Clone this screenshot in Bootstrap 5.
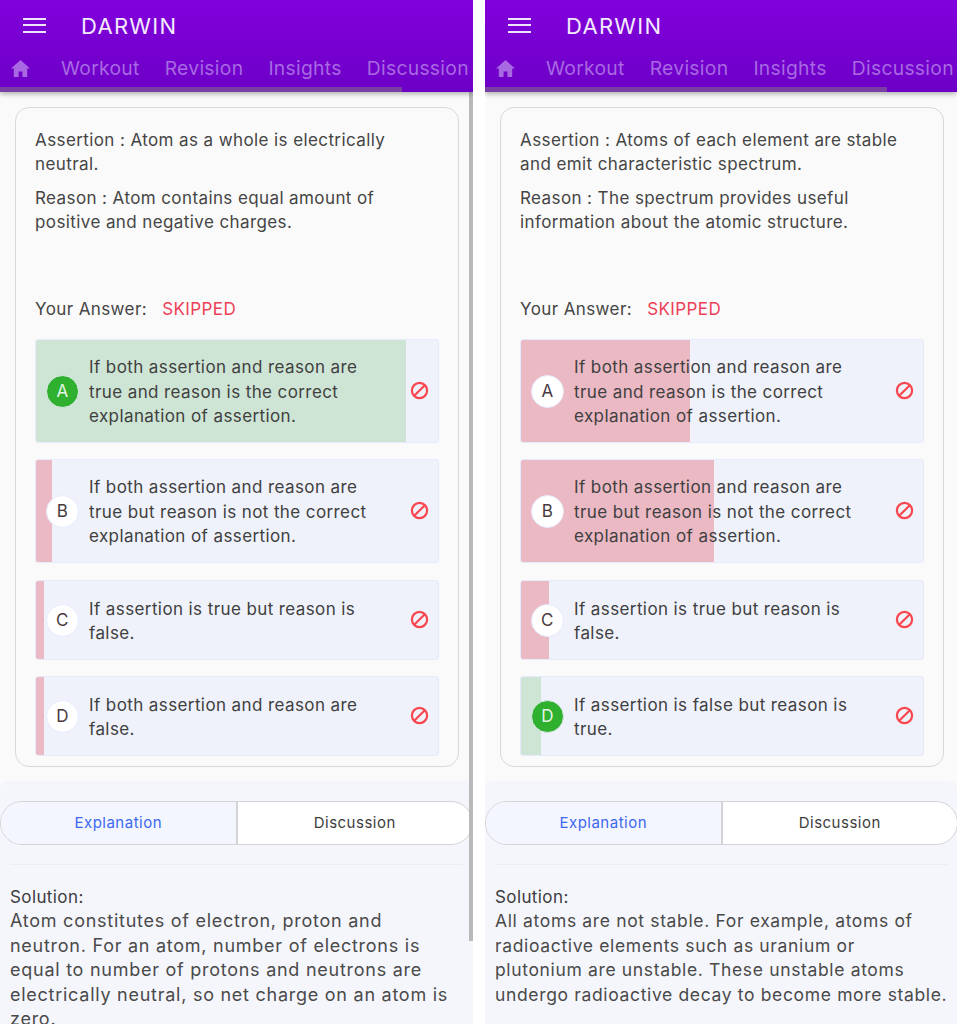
<!DOCTYPE html>
<html lang="en">
  <head>
    <meta charset="UTF-8" />
    <meta name="viewport" content="width=device-width, initial-scale=1.0" />
    <title>Darwin</title>
    <link
      href="https://cdn.jsdelivr.net/npm/bootstrap@5.3.0/dist/css/bootstrap.min.css"
      rel="stylesheet"
    />
    <style>
      body { font-family: Inter, "Open Sans", sans-serif; color: #454545; background: #fff; overflow: hidden; }
      .screens { height: 1024px; gap: 12px; }
      .phone { width: 473px; flex: none; height: 1024px; overflow: hidden; background: #fafafa; }
      .phone + .phone { width: 472px; }
      .phone + .phone .qcard { margin-right: 13px; }
      .topbar { height: 92px; flex: none; background: linear-gradient(#8200dc, #6c00c6); box-shadow: 0 2px 5px rgba(0,0,0,.3); }
      .brandrow { height: 52px; padding-left: 23px; }
      .burger { width: 23px; height: 15px; margin-bottom: 2px; border-top: 2px solid #f0e4fb; border-bottom: 2px solid #f0e4fb; }
      .burger::after { content: ""; display: block; height: 2px; margin-top: 4.5px; background: #f0e4fb; }
      .brandname { margin-left: 35px; font-size: 22px; letter-spacing: 1.3px; color: #f3eafc; font-weight: 400; }
      .tabrow { height: 33px; padding-left: 11px; font-size: 19.3px; letter-spacing: .3px; color: #a869e2; white-space: nowrap; }
      .tabrow span { margin-right: 25px; }
      .tabrow span:last-child { margin-right: 0; }
      .tabrow svg { margin-right: 31px; flex: none; }
      .progresstrack { height: 7px; width: 402px; border-top: 2px solid transparent; background: #7a3fa5; background-clip: padding-box; }
      .qcard { margin: 15px 14px 14px 15px; height: 660px; border: 1px solid #d9d9d9; border-radius: 14px; padding: 20px 19px 10px 19px; background: #fafafa; }
      .qtext { font-size: 17px; line-height: 24px; margin-bottom: 10px; letter-spacing: .4px; }
      .answerline { font-size: 17px; line-height: 24px; letter-spacing: .4px; margin-top: 63px; margin-bottom: 18px; }
      .answerline + .optbox { margin-bottom: 16px; }
      .skipped { color: #ee4157; margin-left: 10px; }
      .optbox { display: flex; align-items: center; border: 1px solid #e6ebfb; border-radius: 3px; margin-bottom: 17px; padding-left: 10px; padding-right: 9px;
        font-size: 17px; line-height: 24.4px; letter-spacing: .4px; color: #404040;
        background: linear-gradient(var(--fillcolor), var(--fillcolor)) no-repeat #eff2fb; background-size: var(--fill) 100%; }
      .optbox.three { height: 104px; }
      .optbox.two { height: 80px; }
      .pink { --fillcolor: #ebb9c4; }
      .green { --fillcolor: #cee5d5; }
      .optletter { width: 33px; height: 33px; flex: none; border-radius: 50%; background: #fff; border: 1px solid #e6ebfb; font-size: 17px; color: #4a3a3f; margin-right: 10px; }
      .optletter.right { background: #2fb02f; color: #e4f5e4; border-color: #dfe9ea; }
      .opttext { flex: 1; padding-right: 25px; padding-top: 2px; }
      .discard { flex: none; margin-bottom: 2px; }
      .lowerpart { background: #f5f6fc; border-radius: 6px 6px 0 0; flex: 1; padding-top: 20px; }
      .switcher { width: 473px; height: 44px; border: 1.5px solid #d4d4d8; border-radius: 22px; overflow: hidden; font-size: 15px; letter-spacing: .5px; background: #fff; }
      .switcher .active-side { width: 236.5px; flex: none; background: #f3f6fe; color: #3d68f0; border-right: 2px solid #d4d4d8; }
      .switcher .plain-side { flex: 1; color: #3d3d3d; }
      .thinrule { margin: 19px 10px 20px; height: 1px; background: #ecedf3; }
      .solution { padding: 0 10px; font-size: 17.5px; line-height: 24.4px; letter-spacing: .65px; color: #4a4a4a; white-space: nowrap; }
      .solution.wider { font-size: 18px; letter-spacing: .74px; }
      .solution .caption { font-size: 17px; letter-spacing: .4px; color: #3c3c3c; }
      .scrollthumb { width: 4px; height: 849px; background: #b9b9b9; top: 92px; right: 0; }
    </style>
  </head>
  <body>
    <div class="screens d-flex">
      <!-- left phone -->
      <div class="phone d-flex flex-column position-relative">
        <div class="topbar d-flex flex-column position-relative z-1">
          <div class="brandrow d-flex align-items-center">
            <div class="burger"></div>
            <div class="brandname">DARWIN</div>
          </div>
          <div class="tabrow d-flex align-items-center">
            <svg width="19" height="17" viewBox="0 0 19 17"><path fill="#a869e2" d="M9.5 0 0 8.5h2.8V17h4.8v-5.6h3.8V17h4.8V8.5H19z"/></svg>
            <span>Workout</span><span>Revision</span><span>Insights</span><span>Discussion</span>
          </div>
          <div class="progresstrack"></div>
        </div>
        <div class="qcard">
          <p class="qtext">Assertion : Atom as a whole is electrically neutral.</p>
          <p class="qtext">Reason : Atom contains equal amount of positive and negative charges.</p>
          <div class="answerline">Your Answer: <span class="skipped">SKIPPED</span></div>
          <div class="optbox three green" style="--fill: 370px">
            <div class="optletter right d-flex align-items-center justify-content-center">A</div>
            <div class="opttext">If both assertion and reason are true and reason is the correct explanation of assertion.</div>
            <svg class="discard" width="19" height="19" viewBox="0 0 19 19"><circle cx="9.5" cy="9.5" r="7.6" fill="none" stroke="#f9474f" stroke-width="2.2"/><path d="M4.2 14.8 14.8 4.2" stroke="#f9474f" stroke-width="2.2"/></svg>
          </div>
          <div class="optbox three pink" style="--fill: 16px">
            <div class="optletter d-flex align-items-center justify-content-center">B</div>
            <div class="opttext">If both assertion and reason are true but reason is not the correct explanation of assertion.</div>
            <svg class="discard" width="19" height="19" viewBox="0 0 19 19"><circle cx="9.5" cy="9.5" r="7.6" fill="none" stroke="#f9474f" stroke-width="2.2"/><path d="M4.2 14.8 14.8 4.2" stroke="#f9474f" stroke-width="2.2"/></svg>
          </div>
          <div class="optbox two pink mb-3" style="--fill: 8px">
            <div class="optletter d-flex align-items-center justify-content-center">C</div>
            <div class="opttext">If assertion is true but reason is false.</div>
            <svg class="discard" width="19" height="19" viewBox="0 0 19 19"><circle cx="9.5" cy="9.5" r="7.6" fill="none" stroke="#f9474f" stroke-width="2.2"/><path d="M4.2 14.8 14.8 4.2" stroke="#f9474f" stroke-width="2.2"/></svg>
          </div>
          <div class="optbox two pink mb-0" style="--fill: 8px">
            <div class="optletter d-flex align-items-center justify-content-center">D</div>
            <div class="opttext">If both assertion and reason are false.</div>
            <svg class="discard" width="19" height="19" viewBox="0 0 19 19"><circle cx="9.5" cy="9.5" r="7.6" fill="none" stroke="#f9474f" stroke-width="2.2"/><path d="M4.2 14.8 14.8 4.2" stroke="#f9474f" stroke-width="2.2"/></svg>
          </div>
        </div>
        <div class="lowerpart">
          <div class="switcher d-flex">
            <div class="active-side d-flex align-items-center justify-content-center">Explanation</div>
            <div class="plain-side d-flex align-items-center justify-content-center">Discussion</div>
          </div>
          <div class="thinrule"></div>
          <div class="solution wider">
            <div class="caption">Solution:</div>
            Atom constitutes of electron, proton and<br />neutron. For an atom, number of electrons is<br />equal to number of protons and neutrons are<br />electrically neutral, so net charge on an atom is<br />zero.
          </div>
        </div>
        <div class="scrollthumb position-absolute"></div>
      </div>
      <!-- right phone -->
      <div class="phone d-flex flex-column">
        <div class="topbar d-flex flex-column position-relative z-1">
          <div class="brandrow d-flex align-items-center">
            <div class="burger"></div>
            <div class="brandname">DARWIN</div>
          </div>
          <div class="tabrow d-flex align-items-center">
            <svg width="19" height="17" viewBox="0 0 19 17"><path fill="#a869e2" d="M9.5 0 0 8.5h2.8V17h4.8v-5.6h3.8V17h4.8V8.5H19z"/></svg>
            <span>Workout</span><span>Revision</span><span>Insights</span><span>Discussion</span>
          </div>
          <div class="progresstrack"></div>
        </div>
        <div class="qcard">
          <p class="qtext">Assertion : Atoms of each element are stable and emit characteristic spectrum.</p>
          <p class="qtext">Reason : The spectrum provides useful information about the atomic structure.</p>
          <div class="answerline">Your Answer: <span class="skipped">SKIPPED</span></div>
          <div class="optbox three pink" style="--fill: 169px">
            <div class="optletter d-flex align-items-center justify-content-center">A</div>
            <div class="opttext">If both assertion and reason are true and reason is the correct explanation of assertion.</div>
            <svg class="discard" width="19" height="19" viewBox="0 0 19 19"><circle cx="9.5" cy="9.5" r="7.6" fill="none" stroke="#f9474f" stroke-width="2.2"/><path d="M4.2 14.8 14.8 4.2" stroke="#f9474f" stroke-width="2.2"/></svg>
          </div>
          <div class="optbox three pink" style="--fill: 193px">
            <div class="optletter d-flex align-items-center justify-content-center">B</div>
            <div class="opttext">If both assertion and reason are true but reason is not the correct explanation of assertion.</div>
            <svg class="discard" width="19" height="19" viewBox="0 0 19 19"><circle cx="9.5" cy="9.5" r="7.6" fill="none" stroke="#f9474f" stroke-width="2.2"/><path d="M4.2 14.8 14.8 4.2" stroke="#f9474f" stroke-width="2.2"/></svg>
          </div>
          <div class="optbox two pink mb-3" style="--fill: 28px">
            <div class="optletter d-flex align-items-center justify-content-center">C</div>
            <div class="opttext">If assertion is true but reason is false.</div>
            <svg class="discard" width="19" height="19" viewBox="0 0 19 19"><circle cx="9.5" cy="9.5" r="7.6" fill="none" stroke="#f9474f" stroke-width="2.2"/><path d="M4.2 14.8 14.8 4.2" stroke="#f9474f" stroke-width="2.2"/></svg>
          </div>
          <div class="optbox two green mb-0" style="--fill: 20px">
            <div class="optletter right d-flex align-items-center justify-content-center">D</div>
            <div class="opttext">If assertion is false but reason is true.</div>
            <svg class="discard" width="19" height="19" viewBox="0 0 19 19"><circle cx="9.5" cy="9.5" r="7.6" fill="none" stroke="#f9474f" stroke-width="2.2"/><path d="M4.2 14.8 14.8 4.2" stroke="#f9474f" stroke-width="2.2"/></svg>
          </div>
        </div>
        <div class="lowerpart">
          <div class="switcher d-flex">
            <div class="active-side d-flex align-items-center justify-content-center">Explanation</div>
            <div class="plain-side d-flex align-items-center justify-content-center">Discussion</div>
          </div>
          <div class="thinrule"></div>
          <div class="solution">
            <div class="caption">Solution:</div>
            All atoms are not stable. For example, atoms of<br />radioactive elements such as uranium or<br />plutonium are unstable. These unstable atoms<br />undergo radioactive decay to become more stable.
          </div>
        </div>
      </div>
    </div>
    <script src="https://cdn.jsdelivr.net/npm/bootstrap@5.3.0/dist/js/bootstrap.bundle.min.js"></script>
  </body>
</html>
